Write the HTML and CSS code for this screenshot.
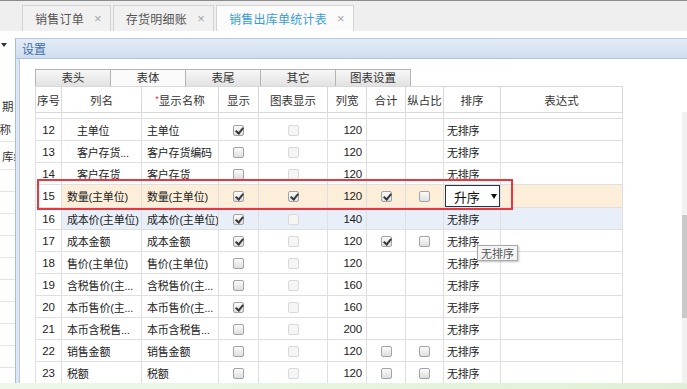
FILE: index.html
```html
<!DOCTYPE html>
<html lang="zh-CN">
<head>
<meta charset="utf-8">
<title>销售出库单统计表</title>
<link rel="stylesheet" href="styles.css">
</head>
<body>
<div class="topbar">
  <div class="tab"><span class="tab-t">销售订单</span><span class="x">×</span></div>
  <div class="tab"><span class="tab-t">存货明细账</span><span class="x">×</span></div>
  <div class="tab active"><span class="tab-t">销售出库单统计表</span><span class="x">×</span></div>
</div>
<div class="main">
  <aside class="lp">
    <div class="lp-head"><span class="caret"></span></div>
    <div class="lp-gap"></div>
    <div class="lp-row lp-r1">期</div>
    <div class="lp-row lp-r2">名称</div>
    <div class="lp-row lp-r3">库编码</div>
    <div class="lp-row"></div>
    <div class="lp-row"></div>
    <div class="lp-row"></div>
    <div class="lp-row"></div>
    <div class="lp-row"></div>
    <div class="lp-row"></div>
    <div class="lp-row"></div>
    <div class="lp-row"></div>
    <div class="lp-row"></div>
    <div class="lp-row"></div>
  </aside>
  <section class="dlg">
    <div class="dlg-title">设置</div>
    <div class="dlg-frame">
      <div class="dlg-body">
        <div class="subtabs">
          <div class="st">表头</div>
          <div class="st on">表体</div>
          <div class="st">表尾</div>
          <div class="st">其它</div>
          <div class="st">图表设置</div>
        </div>
        <div class="grid">
          <div class="tbox">
            <table>
              <colgroup>
                <col class="c-no"><col class="c-name"><col class="c-disp"><col class="c-show"><col class="c-chart"><col class="c-w"><col class="c-sum"><col class="c-pct"><col class="c-sort"><col class="c-expr">
              </colgroup>
              <thead>
                <tr>
                  <th>序号</th><th>列名</th><th><span class="req">*</span>显示名称</th><th>显示</th><th>图表显示</th><th>列宽</th><th>合计</th><th>纵占比</th><th>排序</th><th>表达式</th>
                </tr>
              </thead>
              <tbody>
                <tr class="part"><td></td><td></td><td></td><td></td><td></td><td></td><td></td><td></td><td></td><td></td></tr>
                <tr><td class="no">12</td><td class="nm sub">主单位</td><td class="nm">主单位</td><td class="ck"><span class="cb on"></span></td><td class="ck"><span class="cb dis"></span></td><td class="num">120</td><td></td><td></td><td class="so">无排序</td><td></td></tr>
                <tr><td class="no">13</td><td class="nm sub">客户存货...</td><td class="nm">客户存货编码</td><td class="ck"><span class="cb"></span></td><td class="ck"><span class="cb dis"></span></td><td class="num">120</td><td></td><td></td><td class="so">无排序</td><td></td></tr>
                <tr><td class="no">14</td><td class="nm sub">客户存货</td><td class="nm">客户存货</td><td class="ck"><span class="cb"></span></td><td class="ck"><span class="cb dis"></span></td><td class="num">120</td><td></td><td></td><td class="so">无排序</td><td></td></tr>
                <tr class="sel-row"><td class="no">15</td><td class="nm">数量(主单位)</td><td class="nm">数量(主单位)</td><td class="ck"><span class="cb on"></span></td><td class="ck"><span class="cb on"></span></td><td class="num">120</td><td class="ck"><span class="cb on"></span></td><td class="ck"><span class="cb"></span></td><td class="so-edit"><div class="select"><span>升序</span><span class="arr"></span></div></td><td></td></tr>
                <tr class="hov-row"><td class="no">16</td><td class="nm">成本价(主单位)</td><td class="nm">成本价(主单位)</td><td class="ck"><span class="cb on"></span></td><td class="ck"><span class="cb dis"></span></td><td class="num">140</td><td></td><td></td><td class="so">无排序</td><td></td></tr>
                <tr><td class="no">17</td><td class="nm">成本金额</td><td class="nm">成本金额</td><td class="ck"><span class="cb on"></span></td><td class="ck"><span class="cb dis"></span></td><td class="num">120</td><td class="ck"><span class="cb on"></span></td><td class="ck"><span class="cb"></span></td><td class="so">无排序</td><td></td></tr>
                <tr><td class="no">18</td><td class="nm">售价(主单位)</td><td class="nm">售价(主单位)</td><td class="ck"><span class="cb"></span></td><td class="ck"><span class="cb dis"></span></td><td class="num">120</td><td></td><td></td><td class="so">无排序</td><td></td></tr>
                <tr><td class="no">19</td><td class="nm">含税售价(主...</td><td class="nm">含税售价(主...</td><td class="ck"><span class="cb"></span></td><td class="ck"><span class="cb dis"></span></td><td class="num">160</td><td></td><td></td><td class="so">无排序</td><td></td></tr>
                <tr><td class="no">20</td><td class="nm">本币售价(主...</td><td class="nm">本币售价(主...</td><td class="ck"><span class="cb on"></span></td><td class="ck"><span class="cb dis"></span></td><td class="num">160</td><td></td><td></td><td class="so">无排序</td><td></td></tr>
                <tr><td class="no">21</td><td class="nm">本币含税售...</td><td class="nm">本币含税售...</td><td class="ck"><span class="cb"></span></td><td class="ck"><span class="cb dis"></span></td><td class="num">200</td><td></td><td></td><td class="so">无排序</td><td></td></tr>
                <tr><td class="no">22</td><td class="nm">销售金额</td><td class="nm">销售金额</td><td class="ck"><span class="cb"></span></td><td class="ck"><span class="cb dis"></span></td><td class="num">120</td><td class="ck"><span class="cb"></span></td><td class="ck"><span class="cb"></span></td><td class="so">无排序</td><td></td></tr>
                <tr><td class="no">23</td><td class="nm">税额</td><td class="nm">税额</td><td class="ck"><span class="cb"></span></td><td class="ck"><span class="cb dis"></span></td><td class="num">120</td><td class="ck"><span class="cb"></span></td><td class="ck"><span class="cb"></span></td><td class="so">无排序</td><td></td></tr>
              </tbody>
            </table>
            <div class="redbox"></div>
            <div class="tip">无排序</div>
          </div>
          <div class="vscroll"><div class="thumb"></div></div>
        </div>
      </div>
    </div>
  </section>
</div>
<div class="status"></div>
</body>
</html>
```
FILE: styles.css
```css
* { box-sizing: border-box; }
html, body { margin: 0; padding: 0; }
body {
  width: 687px;
  height: 389px;
  overflow: hidden;
  background: #fff;
  font-family: "Liberation Sans", "Noto Sans CJK SC", sans-serif;
  font-size: 12px;
  color: #222;
  display: flex;
  flex-direction: column;
}

/* top tab bar */
.topbar {
  height: 31px;
  flex: none;
  border-top: 1px solid #8c8c8c;
  background: #efefef;
  display: flex;
  align-items: flex-end;
  padding-left: 22px;
  gap: 2px;
}
.tab {
  height: 26px;
  display: flex;
  align-items: center;
  padding: 0 8px 0 12px;
  border: 1px solid #d3d3d3;
  border-bottom: none;
  background: #f1f1f1;
  color: #555;
  font-family: "Noto Sans CJK SC", sans-serif;
  font-size: 12px;
  letter-spacing: 0.25px;
}
.tab .x {
  margin-left: 10px;
  color: #a8a8a8;
  font-family: "Liberation Sans", sans-serif;
  font-size: 13px;
}
.tab.active { background: #fbfbfb; color: #3a9bd7; }

/* main area */
.main {
  flex: none;
  height: 352px;
  display: flex;
  overflow: hidden;
}

/* left panel */
.lp {
  width: 15px;
  flex: none;
  overflow: hidden;
  display: flex;
  flex-direction: column;
  font-family: "Noto Sans CJK SC", sans-serif;
  font-size: 11.5px;
  color: #333;
}
.lp-head { height: 24px; flex: none; }
.caret {
  display: block;
  width: 0;
  height: 0;
  margin: 12px 0 0 1px;
  border-left: 3px solid transparent;
  border-right: 3px solid transparent;
  border-top: 4px solid #333;
}
.lp-gap { height: 40px; flex: none; }
.lp-row {
  height: 22px;
  flex: none;
  white-space: nowrap;
  border-bottom: 1px solid #e4e4e4;
  display: flex;
  align-items: center;
}
.lp-r1 { border-bottom: none; padding-left: 2px; }
.lp-r2 { height: 25px; justify-content: flex-end; padding-right: 4px; }
.lp-r3 { height: 28px; padding-left: 2px; }

/* dialog */
.dlg {
  flex: 1;
  min-width: 0;
  margin-top: 7px;
  border-left: 1px solid #a3bddb;
  border-top: 1px solid #b7cce4;
  display: flex;
  flex-direction: column;
}
.dlg-title {
  height: 20px;
  flex: none;
  background: linear-gradient(#e3ecf6, #cfdef0);
  border-bottom: 1px solid #aec4de;
  color: #3f6fa8;
  padding-left: 6px;
  line-height: 19px;
  font-family: "Noto Sans CJK SC", sans-serif;
  font-size: 12px;
}
.dlg-frame {
  flex: 1;
  min-height: 0;
  display: flex;
  background: #dce7f3;
  padding-left: 3px;
}
.dlg-body {
  flex: 1;
  min-width: 0;
  display: flex;
  flex-direction: column;
  background: #fff;
  border-left: 1px solid #b5c9df;
  padding: 10px 0 0 15px;
}

/* sub tabs */
.subtabs { display: flex; height: 17px; flex: none; }
.st {
  width: 76px;
  margin-right: -1px;
  border: 1px solid #b4b4b4;
  border-bottom: none;
  background: linear-gradient(#f7f7f7, #e2e2e2);
  text-align: center;
  line-height: 15px;
  color: #333;
  font-family: "Noto Sans CJK SC", sans-serif;
  font-size: 11.5px;
}
.st.on { background: #fafafa; }

/* grid */
.grid { flex: 1; min-height: 0; display: flex; }
.tbox { position: relative; flex: 1; min-width: 0; }
.vscroll {
  width: 5px;
  flex: none;
  margin-top: 26px;
  background: #f1f1f1;
}
.thumb { margin-top: 103px; height: 103px; background: #c9c9c9; }

table {
  border-collapse: collapse;
  table-layout: fixed;
  width: 588px;
  font-family: "Liberation Sans", "Noto Sans CJK SC", sans-serif;
}
.c-no { width: 26px; }
.c-name { width: 80px; }
.c-disp { width: 77px; }
.c-show { width: 40px; }
.c-chart { width: 69px; }
.c-w { width: 39px; }
.c-sum { width: 39px; }
.c-pct { width: 38px; }
.c-sort { width: 57px; }
.c-expr { width: 122px; }

th {
  height: 26px;
  padding: 0;
  font-weight: normal;
  font-size: 11.5px;
  color: #333;
  border: 1px solid #d9d9d9;
  white-space: nowrap;
  overflow: hidden;
}
.req { color: #e03030; font-size: 9px; vertical-align: 3px; }
td {
  height: 22px;
  padding: 0;
  border: 1px solid #dfdfdf;
  white-space: nowrap;
  overflow: hidden;
  color: #222;
  font-size: 11px;
  letter-spacing: -0.2px;
}
tr.part td { height: 6px; }
td.no { text-align: center; font-size: 11.5px; }
td.nm { padding-left: 5px; }
td.nm.sub { padding-left: 15px; }
td.ck { text-align: center; }
td.num { text-align: right; padding-right: 4px; font-size: 11.5px; }
td.so { padding-left: 3px; }
td.so-edit { padding: 0; }

tr.sel-row td { background: #fdeed9; }
tr.hov-row td { background: #e8eff8; }
tr.sel-row td.no, tr.hov-row td.no { background: #fff; }

.cb {
  display: inline-block;
  width: 11px;
  height: 11px;
  border: 1px solid #a3a3a3;
  border-radius: 2px;
  background: linear-gradient(#fbfbfb, #dedede);
  vertical-align: middle;
  position: relative;
}
.cb.dis { border-color: #d9d9d9; background: #f5f5f5; }
.cb.on::after {
  content: "";
  position: absolute;
  left: 3px;
  top: 0px;
  width: 3px;
  height: 6px;
  border: solid #383838;
  border-width: 0 2px 2px 0;
  transform: rotate(40deg);
}

.select {
  width: 55px;
  height: 22px;
  margin: 0 0 0 1px;
  border: 1px solid #22354d;
  background: #fff;
  display: flex;
  align-items: center;
  padding-left: 8px;
  font-size: 13px;
  font-family: "Noto Sans CJK SC", sans-serif;
  color: #111;
}
.select .arr {
  margin-left: 11px;
  width: 0;
  height: 0;
  border-left: 3px solid transparent;
  border-right: 3px solid transparent;
  border-top: 5px solid #111;
}

.redbox {
  position: absolute;
  left: 2px;
  top: 93px;
  width: 476px;
  height: 31px;
  border: 2px solid #e8383d;
}
.tip {
  position: absolute;
  left: 442px;
  top: 159px;
  height: 16px;
  padding: 0 3px;
  border: 1px solid #a8a8a8;
  background: #f4f4f4;
  box-shadow: 1px 1px 2px rgba(0, 0, 0, 0.25);
  color: #555;
  font-family: "Noto Sans CJK SC", sans-serif;
  font-size: 11px;
  line-height: 14px;
}

.status {
  flex: none;
  height: 6px;
  background: linear-gradient(90deg, #eef7ea, #e1f0d4);
}
```
